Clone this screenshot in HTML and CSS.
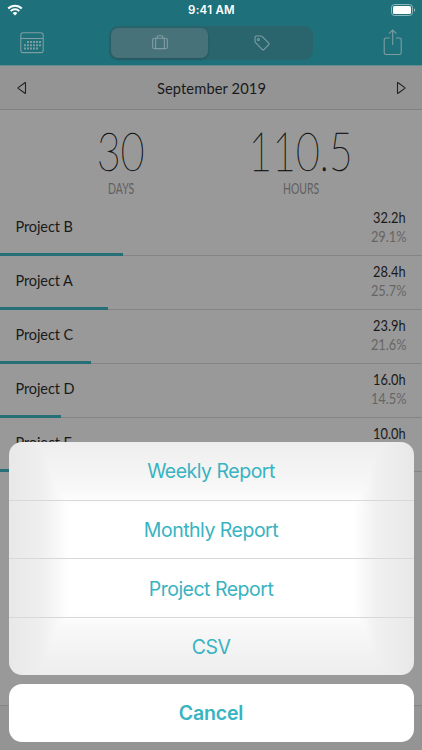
FILE: index.html
```
<!DOCTYPE html>
<html lang="en">
<head>
  <meta charset="utf-8">
  <meta name="viewport" content="width=device-width, initial-scale=1">
  <title>Monthly Summary</title>
  <link rel="stylesheet" href="styles.css">
</head>
<body>
  <header>
    <div class="status-bar">
      <svg class="wifi" width="16" height="12" viewBox="0 0 16 12">
        <path d="M1.2 4.5a9.6 9.6 0 0 1 13.6 0M3.7 7.1a6.1 6.1 0 0 1 8.6 0" fill="none" stroke="#fff" stroke-width="2"/>
        <path d="M5.6 9.1a3.4 3.4 0 0 1 4.8 0L8 11.5z" fill="#fff"/>
      </svg>
      <span class="time">9:41 AM</span>
      <svg class="battery" width="25" height="12" viewBox="0 0 25 12">
        <rect x="0.5" y="0.5" width="21" height="11" rx="3" fill="none" stroke="#8fb8bd"/>
        <rect x="2" y="2" width="18" height="8" rx="1.6" fill="#fff"/>
        <path d="M23 4.2c1.6.4 1.6 3.2 0 3.6z" fill="#8fb8bd"/>
      </svg>
    </div>
    <nav>
      <svg class="icon" width="24" height="22" viewBox="0 0 24 22">
        <rect x="0.8" y="0.8" width="22.4" height="19.8" rx="2.4"/>
        <path d="M1 6.5h22"/>
        <path class="dots" d="M7 10h14M4 13.2h17M4 16.4h14"/>
      </svg>
      <div class="segments">
        <div class="segment active">
          <svg class="icon" width="16" height="15" viewBox="0 0 16 15">
            <rect x="0.6" y="3.2" width="14.8" height="10.4" rx="1.8"/>
            <path d="M3.6 3.2v10.4M12.4 3.2v10.4M5.2 3.2V1.8q0-1 1-1h3.6q1 0 1 1v1.4"/>
          </svg>
        </div>
        <div class="segment">
          <svg class="icon" width="16" height="16" viewBox="0 0 16 16">
            <path d="M1 2v4.4q0 .7.5 1.2l6.9 7q.7.7 1.4 0l5-5q.7-.7 0-1.4L8 1.4Q7.5 1 6.8 1H2Q1 1 1 2z"/>
            <circle cx="4.4" cy="4.5" r="1"/>
          </svg>
        </div>
      </div>
      <svg class="icon share" width="20" height="27" viewBox="0 0 20 27">
        <path d="M6.5 9H3Q1.2 9 1.2 10.8v12.9q0 1.8 1.8 1.8h13.4q1.8 0 1.8-1.8V10.8Q18.2 9 16.4 9H13M9.700 16V1M6 4.700L9.700 1l3.700 3.700"/>
      </svg>
    </nav>
  </header>

  <div class="month">
    <svg width="10" height="14" viewBox="0 0 10 14"><path d="M8.5 2v10q0 .7-.6.3L1.200 7.400q-.5-.4 0-.8l6.700-4.900q.6-.4.600.3z"/></svg>
    <span>September 2019</span>
    <svg width="10" height="14" viewBox="0 0 10 14"><path d="M1.5 2v10q0 .7.6.3l6.700-4.900q.5-.4 0-.8L2.100 1.700q-.6-.4-.6.300z"/></svg>
  </div>

  <div class="summary">
    <div class="total">
      <span class="number">30</span>
      <span class="label">DAYS</span>
    </div>
    <div class="total">
      <span class="number">110.5</span>
      <span class="label">HOURS</span>
    </div>
  </div>

  <ul class="projects">
    <li>
      <span class="name">Project B</span>
      <div class="values"><span class="hours">32.2h</span><span class="percent">29.1%</span></div>
      <div class="bar" style="width: 29.1%"></div>
    </li>
    <li>
      <span class="name">Project A</span>
      <div class="values"><span class="hours">28.4h</span><span class="percent">25.7%</span></div>
      <div class="bar" style="width: 25.7%"></div>
    </li>
    <li>
      <span class="name">Project C</span>
      <div class="values"><span class="hours">23.9h</span><span class="percent">21.6%</span></div>
      <div class="bar" style="width: 21.6%"></div>
    </li>
    <li>
      <span class="name">Project D</span>
      <div class="values"><span class="hours">16.0h</span><span class="percent">14.5%</span></div>
      <div class="bar" style="width: 14.5%"></div>
    </li>
    <li>
      <span class="name">Project E</span>
      <div class="values"><span class="hours">10.0h</span></div>
      <div class="bar" style="width: 9%"></div>
    </li>
  </ul>

  <footer></footer>

  <!-- Export menu -->
  <div class="action-sheet">
    <div class="options">
      <button>Weekly Report</button>
      <button>Monthly Report</button>
      <button>Project Report</button>
      <button>CSV</button>
    </div>
    <button class="cancel">Cancel</button>
  </div>
</body>
</html>
```

FILE: styles.css
```
* {
  box-sizing: border-box;
}
body {
  margin: 0;
  height: 750px;
  display: flex;
  flex-direction: column;
  position: relative;
  overflow: hidden;
  background-color: #999;
  color: #1a1a1a;
  font-family: Lato, sans-serif;
}
header {
  height: 66px;
  background-color: #1e707a;
  border-bottom: 1px solid #5f8d92;
}
.status-bar {
  height: 20px;
  padding: 0 6px 0 7px;
  display: grid;
  grid-template-columns: 1fr auto 1fr;
  align-items: center;
}
.time {
  color: #fff;
  font: 600 11.5px Inter, sans-serif;
  letter-spacing: 0.25px;
}
.battery {
  justify-self: end;
}
nav {
  height: 45px;
  padding: 0 19px 0 20px;
  display: grid;
  grid-template-columns: 89px 204px 1fr;
  align-items: center;
}
.icon {
  fill: none;
  stroke: #7d9da1;
  stroke-width: 1.1;
}
.dots {
  stroke-width: 2;
  stroke-dasharray: 2 1;
}
.share {
  justify-self: end;
}
.segments {
  height: 34px;
  padding: 2px;
  display: flex;
  border-radius: 9px;
  background-color: #2a656e;
}
.segment {
  flex: 1;
  padding-left: 5px;
  display: flex;
  align-items: center;
  justify-content: center;
}
.segment.active {
  flex: none;
  width: 97px;
  padding: 0;
  border-radius: 7px;
  background-color: #487279;
  box-shadow: 0 1px 3px rgba(0, 0, 0, 0.2);
}

.month {
  height: 44px;
  padding: 0 16px 0 17px;
  display: flex;
  align-items: center;
  justify-content: space-between;
  background-color: #949494;
  border-bottom: 1px solid #818181;
  font-size: 14.7px;
  letter-spacing: 0.1px;
}
.month svg {
  fill: none;
  stroke: #222;
  stroke-width: 1.1;
}

.summary {
  height: 92px;
  padding: 15px 31px 0;
  display: grid;
  grid-template-columns: 1fr 1fr;
}
.total {
  display: flex;
  flex-direction: column;
  align-items: center;
}
/* narrow numerals */
.number {
  font-size: 53px;
  font-weight: 100;
  line-height: 51px;
  transform: scaleX(0.77);
  -webkit-text-stroke: 0.5px #111;
}
.label {
  margin-top: 5px;
  color: #606060;
  font-size: 14.5px;
  line-height: 16px;
  transform: scaleX(0.72);
}

.projects {
  margin: 0;
  padding: 0;
  list-style: none;
}
.projects li {
  height: 54px;
  padding-top: 5px;
  display: grid;
  grid-template-columns: 1fr auto;
  grid-template-rows: 45px 3px;
  border-bottom: 1px solid #848484;
}
.name {
  padding: 10px 0 0 15.5px;
  font-size: 14.5px;
  line-height: 20px;
  letter-spacing: -0.1px;
}
.values {
  padding-right: 16px;
  display: flex;
  flex-direction: column;
  align-items: flex-end;
  font-size: 16px;
  line-height: 19px;
}
.hours, .percent {
  transform: scaleX(0.8);
  transform-origin: right;
}
.percent {
  color: #666;
}
.bar {
  grid-column: 1 / 3;
  height: 3px;
  margin-top: 1px;
  background-color: #266f77;
}
footer {
  height: 45px;
  margin-top: auto;
  background-color: #949494;
  border-top: 1px solid #848484;
}

.action-sheet {
  position: absolute;
  left: 8.5px;
  right: 8.5px;
  bottom: 8.5px;
  display: flex;
  flex-direction: column;
  gap: 8.5px;
}
.options {
  border-radius: 13px;
  overflow: hidden;
  background:
    linear-gradient(#eee, #f8f8f8 20%, #fff 27%, #fff 73%, #f8f8f8 80%, #ededed),
    linear-gradient(90deg, #e8e8e8, #efefef 8%, #fff 15%, #fff 85%, #f0f0f0 91%, #e8e8e8);
  background-blend-mode: darken;
}
button {
  width: 100%;
  height: 58.3px;
  display: block;
  padding: 1px 0 0;
  border: none;
  background: none;
  color: #38b3c1;
  font: 400 19.5px Inter, sans-serif;
  letter-spacing: -0.5px;
}
.options button + button {
  border-top: 1px solid #d8d8d8;
}
.action-sheet .cancel {
  height: 58px;
  border-radius: 13px;
  background-color: #fff;
  font-weight: 600;
  letter-spacing: -0.2px;
}
```
